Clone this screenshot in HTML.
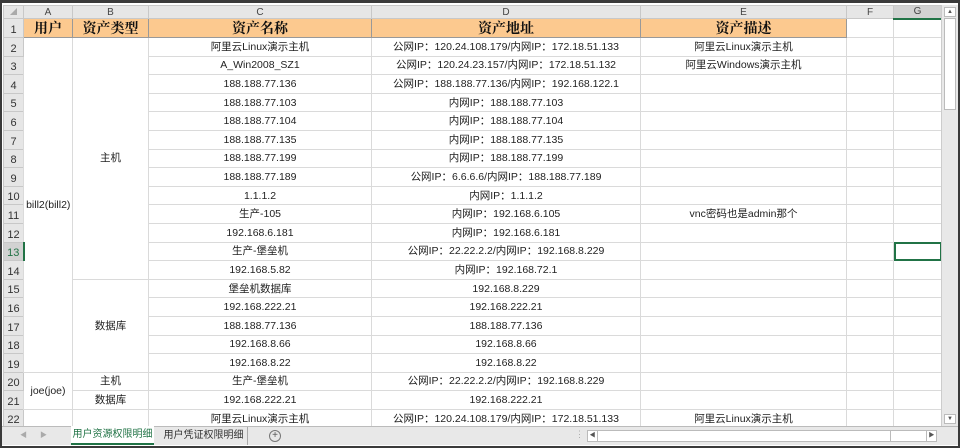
<!DOCTYPE html>
<html><head><meta charset="utf-8"><style>
*{margin:0;padding:0;box-sizing:border-box}
body{width:960px;height:448px;overflow:hidden;background:#fff;position:relative;font-family:"Liberation Sans","Noto Sans CJK SC",sans-serif;font-size:10.5px;color:#222}
#frame{position:absolute;left:0;top:0;width:960px;height:448px;border:2px solid #3a3a3a;border-top-width:3px}
table{position:absolute;left:3px;top:5px;border-collapse:collapse;table-layout:fixed}
td{border:1px solid #dadada;text-align:center;vertical-align:middle;height:18.6px;line-height:14px;white-space:nowrap;overflow:hidden;padding:0}
tr.ch td{height:13px;line-height:11px;background:#e6e6e6;border-color:#c8c8c8;color:#444;font-size:10px}
td.rn{background:#e6e6e6;border-color:#c8c8c8;color:#333;font-size:11px;vertical-align:bottom;line-height:13px}
tr.h td{height:19px}
tr.h td.c{background:#fcc98f;font-family:"Noto Serif CJK SC",serif;font-weight:bold;font-size:14px;line-height:16px;border-color:#999;color:#111}
td.sel{outline:2px solid #217346;outline-offset:-2px}
#vs{position:absolute;left:941px;top:5px;width:17px;height:421px;background:#e8e8e8;border-left:1px solid #ccc}
#tabs{position:absolute;left:2px;top:426px;width:956px;height:19px;background:#e8e8e8;border-top:1px solid #bbb}
</style></head><body>
<table>
<colgroup><col style="width:20px"><col style="width:49px"><col style="width:76px"><col style="width:223px"><col style="width:269px"><col style="width:206px"><col style="width:47px"><col style="width:48px"></colgroup>
<tr class="ch"><td style="font-size:7px;color:#aaa">◢</td><td>A</td><td>B</td><td>C</td><td>D</td><td>E</td><td>F</td><td style="background:#d2d2d2;border-bottom:2px solid #217346">G</td></tr>
<tr class="h"><td class="rn">1</td><td class="c">用户</td><td class="c">资产类型</td><td class="c">资产名称</td><td class="c">资产地址</td><td class="c">资产描述</td><td></td><td></td></tr>
<tr><td class="rn">2</td><td rowspan="18">bill2(bill2)</td><td rowspan="13">主机</td><td>阿里云Linux演示主机</td><td>公网IP：120.24.108.179/内网IP：172.18.51.133</td><td>阿里云Linux演示主机</td><td></td><td></td></tr>
<tr><td class="rn">3</td><td>A_Win2008_SZ1</td><td>公网IP：120.24.23.157/内网IP：172.18.51.132</td><td>阿里云Windows演示主机</td><td></td><td></td></tr>
<tr><td class="rn">4</td><td>188.188.77.136</td><td>公网IP：188.188.77.136/内网IP：192.168.122.1</td><td></td><td></td><td></td></tr>
<tr><td class="rn">5</td><td>188.188.77.103</td><td>内网IP：188.188.77.103</td><td></td><td></td><td></td></tr>
<tr><td class="rn">6</td><td>188.188.77.104</td><td>内网IP：188.188.77.104</td><td></td><td></td><td></td></tr>
<tr><td class="rn">7</td><td>188.188.77.135</td><td>内网IP：188.188.77.135</td><td></td><td></td><td></td></tr>
<tr><td class="rn">8</td><td>188.188.77.199</td><td>内网IP：188.188.77.199</td><td></td><td></td><td></td></tr>
<tr><td class="rn">9</td><td>188.188.77.189</td><td>公网IP：6.6.6.6/内网IP：188.188.77.189</td><td></td><td></td><td></td></tr>
<tr><td class="rn">10</td><td>1.1.1.2</td><td>内网IP：1.1.1.2</td><td></td><td></td><td></td></tr>
<tr><td class="rn">11</td><td>生产-105</td><td>内网IP：192.168.6.105</td><td>vnc密码也是admin那个</td><td></td><td></td></tr>
<tr><td class="rn">12</td><td>192.168.6.181</td><td>内网IP：192.168.6.181</td><td></td><td></td><td></td></tr>
<tr><td class="rn" style="background:#d2d2d2;color:#217346;border-right:2px solid #217346">13</td><td>生产-堡垒机</td><td>公网IP：22.22.2.2/内网IP：192.168.8.229</td><td></td><td></td><td class="sel"></td></tr>
<tr><td class="rn">14</td><td>192.168.5.82</td><td>内网IP：192.168.72.1</td><td></td><td></td><td></td></tr>
<tr><td class="rn">15</td><td rowspan="5">数据库</td><td>堡垒机数据库</td><td>192.168.8.229</td><td></td><td></td><td></td></tr>
<tr><td class="rn">16</td><td>192.168.222.21</td><td>192.168.222.21</td><td></td><td></td><td></td></tr>
<tr><td class="rn">17</td><td>188.188.77.136</td><td>188.188.77.136</td><td></td><td></td><td></td></tr>
<tr><td class="rn">18</td><td>192.168.8.66</td><td>192.168.8.66</td><td></td><td></td><td></td></tr>
<tr><td class="rn">19</td><td>192.168.8.22</td><td>192.168.8.22</td><td></td><td></td><td></td></tr>
<tr><td class="rn">20</td><td rowspan="2">joe(joe)</td><td>主机</td><td>生产-堡垒机</td><td>公网IP：22.22.2.2/内网IP：192.168.8.229</td><td></td><td></td><td></td></tr>
<tr><td class="rn">21</td><td>数据库</td><td>192.168.222.21</td><td>192.168.222.21</td><td></td><td></td><td></td></tr>
<tr><td class="rn">22</td><td></td><td></td><td>阿里云Linux演示主机</td><td>公网IP：120.24.108.179/内网IP：172.18.51.133</td><td>阿里云Linux演示主机</td><td></td><td></td></tr>
</table>
<div id="vs">
<div style="position:absolute;left:2px;top:2px;width:12px;height:10px;background:#fff;border:1px solid #bbb;font-size:6px;text-align:center;line-height:9px;color:#555">▲</div>
<div style="position:absolute;left:2px;top:13px;width:12px;height:92px;background:#fff;border:1px solid #bbb"></div>
<div style="position:absolute;left:2px;bottom:2px;width:12px;height:10px;background:#fff;border:1px solid #bbb;font-size:6px;text-align:center;line-height:9px;color:#555">▼</div>
</div>
<div id="tabs">
<span style="position:absolute;left:18px;top:3px;font-size:7px;color:#aaa">◀</span>
<span style="position:absolute;left:38px;top:3px;font-size:7px;color:#aaa">▶</span>
<div style="position:absolute;left:69px;top:-1px;width:83px;height:19px;background:#fff;border-bottom:2px solid #217346;color:#217346;font-size:10px;text-align:center;line-height:17px">用户资源权限明细</div>
<div style="position:absolute;left:158px;top:0;width:88px;height:18px;color:#333;font-size:10px;text-align:center;line-height:17px;border-right:1px solid #aaa">用户凭证权限明细</div>
<div style="position:absolute;left:267px;top:3px;width:12px;height:12px;border:1px solid #777;border-radius:50%;font-size:10px;line-height:10px;text-align:center;color:#555">+</div>
<span style="position:absolute;left:573px;top:2px;font-size:9px;color:#aaa">⋮</span>
<div style="position:absolute;left:585px;top:3px;width:350px;height:12px;background:#fff;border:1px solid #bbb">
<div style="position:absolute;left:0;top:0;width:10px;height:10px;border-right:1px solid #bbb;font-size:6px;line-height:10px;text-align:center;color:#555">◀</div>
<div style="position:absolute;left:10px;top:0;width:293px;height:10px;border-right:1px solid #bbb"></div>
<div style="position:absolute;right:0;top:0;width:10px;height:10px;border-left:1px solid #bbb;font-size:6px;line-height:10px;text-align:center;color:#555">▶</div>
</div>
</div>
<div id="frame"></div>
</body></html>
